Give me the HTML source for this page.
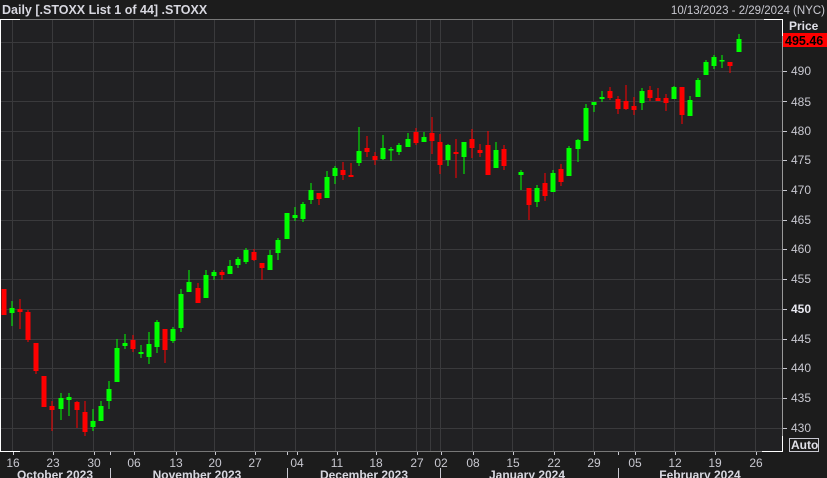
<!DOCTYPE html>
<html><head><meta charset="utf-8"><style>
html,body{margin:0;padding:0;background:#1c1c1c;width:827px;height:478px;overflow:hidden}
svg{display:block}
text{font-family:"Liberation Sans","DejaVu Sans",sans-serif}
</style></head><body>
<svg width="827" height="478" xmlns="http://www.w3.org/2000/svg">
<rect width="827" height="478" fill="#1c1c1c"/>
<rect x="0" y="19" width="782" height="432" fill="#212123"/>
<g stroke="#3a3a3c" stroke-width="1">
<line x1="0" y1="71.5" x2="782" y2="71.5"/><line x1="0" y1="101.5" x2="782" y2="101.5"/><line x1="0" y1="131.5" x2="782" y2="131.5"/><line x1="0" y1="160.5" x2="782" y2="160.5"/><line x1="0" y1="190.5" x2="782" y2="190.5"/><line x1="0" y1="220.5" x2="782" y2="220.5"/><line x1="0" y1="249.5" x2="782" y2="249.5"/><line x1="0" y1="279.5" x2="782" y2="279.5"/><line x1="0" y1="309.5" x2="782" y2="309.5"/><line x1="0" y1="339.5" x2="782" y2="339.5"/><line x1="0" y1="368.5" x2="782" y2="368.5"/><line x1="0" y1="398.5" x2="782" y2="398.5"/><line x1="0" y1="428.5" x2="782" y2="428.5"/><line x1="0" y1="42.5" x2="782" y2="42.5"/>
<line x1="12.5" y1="19" x2="12.5" y2="451"/><line x1="52.5" y1="19" x2="52.5" y2="451"/><line x1="93.5" y1="19" x2="93.5" y2="451"/><line x1="133.5" y1="19" x2="133.5" y2="451"/><line x1="174.5" y1="19" x2="174.5" y2="451"/><line x1="214.5" y1="19" x2="214.5" y2="451"/><line x1="254.5" y1="19" x2="254.5" y2="451"/><line x1="295.5" y1="19" x2="295.5" y2="451"/><line x1="335.5" y1="19" x2="335.5" y2="451"/><line x1="375.5" y1="19" x2="375.5" y2="451"/><line x1="416.5" y1="19" x2="416.5" y2="451"/><line x1="430.5" y1="19" x2="430.5" y2="451"/><line x1="440.5" y1="19" x2="440.5" y2="451"/><line x1="472.5" y1="19" x2="472.5" y2="451"/><line x1="512.5" y1="19" x2="512.5" y2="451"/><line x1="553.5" y1="19" x2="553.5" y2="451"/><line x1="593.5" y1="19" x2="593.5" y2="451"/><line x1="634.5" y1="19" x2="634.5" y2="451"/><line x1="674.5" y1="19" x2="674.5" y2="451"/><line x1="714.5" y1="19" x2="714.5" y2="451"/><line x1="755.5" y1="19" x2="755.5" y2="451"/>
</g>
<line x1="0" y1="19.5" x2="782" y2="19.5" stroke="#777"/>
<line x1="0" y1="451.5" x2="782" y2="451.5" stroke="#777"/>
<g stroke="#fff" stroke-width="1" fill="none">
<polyline points="20,19.5 0.5,19.5 0.5,451.5 20,451.5"/>
<polyline points="764,19.5 782.5,19.5 782.5,36"/>
<polyline points="762,451.5 782.5,451.5 782.5,436"/>
</g>
<line x1="782.5" y1="36" x2="782.5" y2="436" stroke="#999"/>

<g fill="#ff0000">
<rect x="1.5" y="289" width="5" height="26"/>
<rect x="17.5" y="309" width="5" height="3"/><rect x="19.5" y="299" width="1" height="30"/>
<rect x="25.5" y="312" width="5" height="28"/><rect x="27.5" y="310" width="1" height="32"/>
<rect x="33.5" y="343" width="5" height="28"/><rect x="35.5" y="343" width="1" height="31"/>
<rect x="41.5" y="376" width="5" height="31"/>
<rect x="49.5" y="406" width="5" height="4"/><rect x="51.5" y="401" width="1" height="30"/>
<rect x="74.5" y="402" width="5" height="8"/><rect x="76.5" y="401" width="1" height="27"/>
<rect x="82.5" y="412" width="5" height="20"/><rect x="84.5" y="401" width="1" height="35"/>
<rect x="130.5" y="340" width="5" height="9"/><rect x="132.5" y="335" width="1" height="17"/>
<rect x="162.5" y="329" width="5" height="21"/><rect x="164.5" y="329" width="1" height="34"/>
<rect x="195.5" y="288" width="5" height="15"/><rect x="197.5" y="283" width="1" height="20"/>
<rect x="219.5" y="272" width="5" height="3"/><rect x="221.5" y="270" width="1" height="10"/>
<rect x="251.5" y="252" width="5" height="8"/><rect x="253.5" y="249" width="1" height="12"/>
<rect x="259.5" y="263" width="5" height="5"/><rect x="261.5" y="263" width="1" height="17"/>
<rect x="316.5" y="193" width="5" height="6"/><rect x="318.5" y="193" width="1" height="12"/>
<rect x="340.5" y="170" width="5" height="5"/><rect x="342.5" y="162" width="1" height="18"/>
<rect x="348.5" y="175" width="5" height="2"/><rect x="350.5" y="163" width="1" height="14"/>
<rect x="364.5" y="148" width="5" height="4"/><rect x="366.5" y="136" width="1" height="21"/>
<rect x="372.5" y="156" width="5" height="4"/><rect x="374.5" y="152" width="1" height="13"/>
<rect x="413.5" y="132" width="5" height="11"/><rect x="415.5" y="128" width="1" height="17"/>
<rect x="429.5" y="133" width="5" height="8"/><rect x="431.5" y="117" width="1" height="37"/>
<rect x="437.5" y="142" width="5" height="23"/><rect x="439.5" y="134" width="1" height="40"/>
<rect x="453.5" y="152" width="5" height="2"/><rect x="455.5" y="139" width="1" height="39"/>
<rect x="469.5" y="139" width="5" height="9"/><rect x="471.5" y="129" width="1" height="29"/>
<rect x="477.5" y="150" width="5" height="3"/><rect x="479.5" y="144" width="1" height="13"/>
<rect x="485.5" y="145" width="5" height="30"/><rect x="487.5" y="131" width="1" height="44"/>
<rect x="501.5" y="149" width="5" height="17"/><rect x="503.5" y="145" width="1" height="25"/>
<rect x="526.5" y="188" width="5" height="17"/><rect x="528.5" y="188" width="1" height="32"/>
<rect x="542.5" y="183" width="5" height="13"/><rect x="544.5" y="173" width="1" height="28"/>
<rect x="558.5" y="169" width="5" height="13"/><rect x="560.5" y="164" width="1" height="22"/>
<rect x="607.5" y="91" width="5" height="7"/><rect x="609.5" y="87" width="1" height="13"/>
<rect x="615.5" y="99" width="5" height="10"/><rect x="617.5" y="96" width="1" height="18"/>
<rect x="623.5" y="101" width="5" height="8"/><rect x="625.5" y="85" width="1" height="25"/>
<rect x="631.5" y="106" width="5" height="4"/><rect x="633.5" y="97" width="1" height="18"/>
<rect x="647.5" y="90" width="5" height="8"/><rect x="649.5" y="86" width="1" height="15"/>
<rect x="655.5" y="98" width="5" height="3"/><rect x="657.5" y="88" width="1" height="13"/>
<rect x="663.5" y="98" width="5" height="5"/><rect x="665.5" y="94" width="1" height="17"/>
<rect x="679.5" y="87" width="5" height="28"/><rect x="681.5" y="87" width="1" height="37"/>
<rect x="727.5" y="62" width="5" height="4"/><rect x="729.5" y="62" width="1" height="11"/>
</g>
<g fill="#00ff00">
<rect x="9.5" y="308" width="5" height="5"/><rect x="11.5" y="301" width="1" height="25"/>
<rect x="58.5" y="398" width="5" height="11"/><rect x="60.5" y="393" width="1" height="27"/>
<rect x="66.5" y="397" width="5" height="3"/><rect x="68.5" y="393" width="1" height="23"/>
<rect x="90.5" y="421" width="5" height="6"/><rect x="92.5" y="409" width="1" height="22"/>
<rect x="98.5" y="406" width="5" height="15"/><rect x="100.5" y="401" width="1" height="20"/>
<rect x="106.5" y="389" width="5" height="12"/><rect x="108.5" y="381" width="1" height="28"/>
<rect x="114.5" y="348" width="5" height="34"/><rect x="116.5" y="339" width="1" height="43"/>
<rect x="122.5" y="343" width="5" height="3"/><rect x="124.5" y="334" width="1" height="15"/>
<rect x="138.5" y="352" width="5" height="2"/><rect x="140.5" y="345" width="1" height="13"/>
<rect x="146.5" y="344" width="5" height="13"/><rect x="148.5" y="332" width="1" height="32"/>
<rect x="154.5" y="322" width="5" height="25"/><rect x="156.5" y="320" width="1" height="33"/>
<rect x="170.5" y="329" width="5" height="12"/><rect x="172.5" y="327" width="1" height="16"/>
<rect x="178.5" y="294" width="5" height="34"/><rect x="180.5" y="289" width="1" height="43"/>
<rect x="186.5" y="282" width="5" height="10"/><rect x="188.5" y="270" width="1" height="22"/>
<rect x="203.5" y="275" width="5" height="23"/><rect x="205.5" y="270" width="1" height="28"/>
<rect x="211.5" y="272" width="5" height="4"/><rect x="213.5" y="270" width="1" height="10"/>
<rect x="227.5" y="266" width="5" height="8"/><rect x="229.5" y="260" width="1" height="14"/>
<rect x="235.5" y="259" width="5" height="6"/><rect x="237.5" y="257" width="1" height="11"/>
<rect x="243.5" y="250" width="5" height="12"/><rect x="245.5" y="248" width="1" height="16"/>
<rect x="267.5" y="255" width="5" height="15"/><rect x="269.5" y="250" width="1" height="20"/>
<rect x="275.5" y="240" width="5" height="13"/><rect x="277.5" y="238" width="1" height="22"/>
<rect x="284.5" y="213" width="5" height="26"/>
<rect x="292.5" y="215" width="5" height="3"/><rect x="294.5" y="207" width="1" height="14"/>
<rect x="300.5" y="204" width="5" height="15"/><rect x="302.5" y="202" width="1" height="20"/>
<rect x="308.5" y="190" width="5" height="10"/><rect x="310.5" y="183" width="1" height="21"/>
<rect x="324.5" y="177" width="5" height="21"/><rect x="326.5" y="171" width="1" height="27"/>
<rect x="332.5" y="168" width="5" height="8"/><rect x="334.5" y="166" width="1" height="18"/>
<rect x="356.5" y="151" width="5" height="12"/><rect x="358.5" y="127" width="1" height="39"/>
<rect x="380.5" y="148" width="5" height="11"/><rect x="382.5" y="135" width="1" height="25"/>
<rect x="388.5" y="149" width="5" height="1.5"/><rect x="390.5" y="147" width="1" height="14"/>
<rect x="396.5" y="145" width="5" height="7"/><rect x="398.5" y="143" width="1" height="12"/>
<rect x="405.5" y="139" width="5" height="8"/><rect x="407.5" y="133" width="1" height="14"/>
<rect x="421.5" y="137" width="5" height="5"/><rect x="423.5" y="132" width="1" height="10"/>
<rect x="445.5" y="145" width="5" height="15"/><rect x="447.5" y="144" width="1" height="22"/>
<rect x="461.5" y="142" width="5" height="15"/><rect x="463.5" y="142" width="1" height="32"/>
<rect x="493.5" y="150" width="5" height="18"/><rect x="495.5" y="142" width="1" height="26"/>
<rect x="518.5" y="172" width="5" height="3"/><rect x="520.5" y="170" width="1" height="20"/>
<rect x="534.5" y="188" width="5" height="14"/><rect x="536.5" y="185" width="1" height="22"/>
<rect x="550.5" y="173" width="5" height="19"/><rect x="552.5" y="170" width="1" height="22"/>
<rect x="566.5" y="148" width="5" height="28"/><rect x="568.5" y="146" width="1" height="30"/>
<rect x="575.5" y="140" width="5" height="9"/><rect x="577.5" y="139" width="1" height="23"/>
<rect x="583.5" y="108" width="5" height="33"/><rect x="585.5" y="104" width="1" height="37"/>
<rect x="591.5" y="102" width="5" height="3"/><rect x="593.5" y="102" width="1" height="10"/>
<rect x="599.5" y="97" width="5" height="2"/><rect x="601.5" y="91" width="1" height="11"/>
<rect x="639.5" y="91" width="5" height="12"/><rect x="641.5" y="88" width="1" height="22"/>
<rect x="671.5" y="87" width="5" height="12"/><rect x="673.5" y="86" width="1" height="13"/>
<rect x="687.5" y="100" width="5" height="16"/><rect x="689.5" y="96" width="1" height="20"/>
<rect x="695.5" y="80" width="5" height="17"/><rect x="697.5" y="78" width="1" height="19"/>
<rect x="703.5" y="62" width="5" height="13"/><rect x="705.5" y="60" width="1" height="15"/>
<rect x="711.5" y="57" width="5" height="9"/><rect x="713.5" y="55" width="1" height="14"/>
<rect x="719.5" y="60" width="5" height="1.5"/><rect x="721.5" y="55" width="1" height="13"/>
<rect x="736.5" y="39" width="5" height="13"/><rect x="738.5" y="34" width="1" height="18"/>
</g>

<text x="2" y="14" fill="#d8d8e0" font-size="12.5" font-weight="bold">Daily [.STOXX List 1 of 44] .STOXX</text>
<text x="825" y="14" fill="#c8c8d0" font-size="11.5" text-anchor="end">10/13/2023 - 2/29/2024 (NYC)</text>
<text x="789" y="30" fill="#e0e0e8" font-size="12" font-weight="bold">Price</text>
<rect x="783" y="33" width="44" height="14" fill="#ff0000"/>
<text x="785" y="45" fill="#000" font-size="12.5" font-weight="bold">495.46</text>
<g fill="#c8c8d0" font-size="12" stroke="none">
<text x="791" y="75">490</text><text x="791" y="106">485</text><text x="791" y="135">480</text><text x="791" y="164">475</text><text x="791" y="194">470</text><text x="791" y="224">465</text><text x="791" y="253">460</text><text x="791" y="283">455</text><text x="791" y="313" font-weight="bold" fill="#e8e8f0">450</text><text x="791" y="343">445</text><text x="791" y="372">440</text><text x="791" y="402">435</text><text x="791" y="432">430</text>
</g>
<g stroke="#c8c8d0"><line x1="783" y1="71.5" x2="787" y2="71.5"/><line x1="783" y1="101.5" x2="787" y2="101.5"/><line x1="783" y1="131.5" x2="787" y2="131.5"/><line x1="783" y1="160.5" x2="787" y2="160.5"/><line x1="783" y1="190.5" x2="787" y2="190.5"/><line x1="783" y1="220.5" x2="787" y2="220.5"/><line x1="783" y1="249.5" x2="787" y2="249.5"/><line x1="783" y1="279.5" x2="787" y2="279.5"/><line x1="783" y1="309.5" x2="787" y2="309.5"/><line x1="783" y1="339.5" x2="787" y2="339.5"/><line x1="783" y1="368.5" x2="787" y2="368.5"/><line x1="783" y1="398.5" x2="787" y2="398.5"/><line x1="783" y1="428.5" x2="787" y2="428.5"/></g>
<rect x="789.5" y="438.5" width="29" height="13" fill="none" stroke="#c8c8d0"/>
<text x="791" y="449" fill="#e0e0e8" font-size="12" font-weight="bold">Auto</text>

<g fill="#c8c8d0" font-size="12" text-anchor="middle">
<text x="13" y="467">16</text><text x="53" y="467">23</text><text x="94" y="467">30</text><text x="134" y="467">06</text><text x="176" y="467">13</text><text x="215" y="467">20</text><text x="255" y="467">27</text><text x="297" y="467">04</text><text x="337" y="467">11</text><text x="376" y="467">18</text><text x="417" y="467">27</text><text x="441" y="467">02</text><text x="473" y="467">08</text><text x="513" y="467">15</text><text x="554" y="467">22</text><text x="594" y="467">29</text><text x="635" y="467">05</text><text x="675" y="467">12</text><text x="715" y="467">19</text><text x="756" y="467">26</text>
</g>
<g fill="#d8d8e0" font-size="12" font-weight="bold" text-anchor="middle">
<text x="55" y="479">October 2023</text><text x="197" y="479">November 2023</text><text x="364" y="479">December 2023</text><text x="527" y="479">January 2024</text><text x="700" y="479">February 2024</text>
</g>
<g stroke="#c8c8d0">
<line x1="13.5" y1="452" x2="13.5" y2="455"/><line x1="53.5" y1="452" x2="53.5" y2="455"/><line x1="94.5" y1="452" x2="94.5" y2="455"/><line x1="110.5" y1="452" x2="110.5" y2="455"/><line x1="134.5" y1="452" x2="134.5" y2="455"/><line x1="176.5" y1="452" x2="176.5" y2="455"/><line x1="215.5" y1="452" x2="215.5" y2="455"/><line x1="255.5" y1="452" x2="255.5" y2="455"/><line x1="287.5" y1="452" x2="287.5" y2="455"/><line x1="297.5" y1="452" x2="297.5" y2="455"/><line x1="337.5" y1="452" x2="337.5" y2="455"/><line x1="376.5" y1="452" x2="376.5" y2="455"/><line x1="417.5" y1="452" x2="417.5" y2="455"/><line x1="441.5" y1="452" x2="441.5" y2="455"/><line x1="473.5" y1="452" x2="473.5" y2="455"/><line x1="513.5" y1="452" x2="513.5" y2="455"/><line x1="554.5" y1="452" x2="554.5" y2="455"/><line x1="594.5" y1="452" x2="594.5" y2="455"/><line x1="618.5" y1="452" x2="618.5" y2="455"/><line x1="635.5" y1="452" x2="635.5" y2="455"/><line x1="675.5" y1="452" x2="675.5" y2="455"/><line x1="715.5" y1="452" x2="715.5" y2="455"/><line x1="756.5" y1="452" x2="756.5" y2="455"/>
<line x1="110.5" y1="468" x2="110.5" y2="478"/><line x1="287.5" y1="468" x2="287.5" y2="478"/><line x1="440.5" y1="468" x2="440.5" y2="478"/><line x1="618.5" y1="468" x2="618.5" y2="478"/>
</g>
</svg>
</body></html>
